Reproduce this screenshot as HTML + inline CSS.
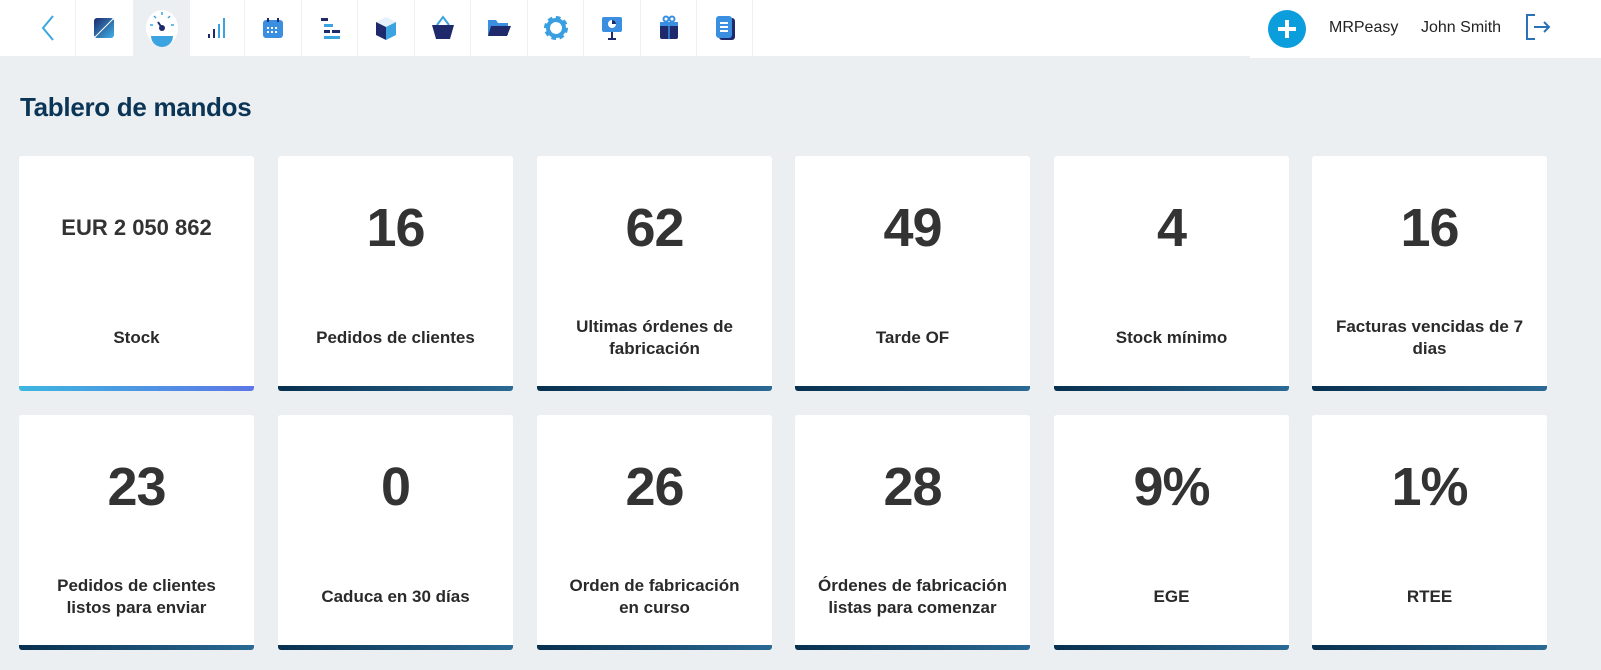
<!DOCTYPE html>
<html><head><meta charset="utf-8"><style>
*{margin:0;padding:0;box-sizing:border-box}
body{width:1601px;height:670px;background:#eceff2;font-family:"Liberation Sans",sans-serif;overflow:hidden;position:relative}
.hdr{position:absolute;left:0;top:0;width:1601px;height:56px;background:#fff}
.tab{position:absolute;top:0;height:56px;width:57px;border-left:1px solid #eef0f3;display:flex;align-items:center;justify-content:center}
.tab.act{background:#eceff2}
h1{position:absolute;left:20px;top:92px;font-size:26px;font-weight:bold;color:#0b3556;letter-spacing:-0.3px}
.card{position:absolute;width:235px;height:235px;background:#fff;border-radius:3px;overflow:hidden}
.card:after{content:"";position:absolute;left:0;right:0;bottom:0;height:5px;background:linear-gradient(90deg,#08304f,#2a6a94)}
.card.first:after{background:linear-gradient(90deg,#3db6e0,#5d77e6)}
.num{position:absolute;left:0;right:0;top:72px;transform:translateY(-50%);text-align:center;font-size:54px;font-weight:bold;color:#333;letter-spacing:-1px}
.num.s{font-size:22px;letter-spacing:0}
.lbl{position:absolute;left:4px;right:4px;top:182px;transform:translateY(-50%);text-align:center;font-size:17px;font-weight:bold;color:#2a2a2a;line-height:22px;white-space:nowrap}
.top{position:absolute;top:0;height:56px;display:flex;align-items:center;font-size:16px;color:#222}
</style></head><body>
<div class="hdr"></div>
<svg style="position:absolute;left:38px;top:14px" width="20" height="28"><path d="M15 2 L5 14 L15 26" fill="none" stroke="#3aa9e0" stroke-width="2"/></svg>
<div class="tab" style="left:75px"><svg width="24" height="24"><defs><linearGradient id="g1" x1="0" y1="0" x2="1" y2="1"><stop offset="0" stop-color="#1e2a6b"/><stop offset="1" stop-color="#3fb2e8"/></linearGradient></defs><rect x="2" y="2" width="20" height="20" rx="3" fill="url(#g1)"/><path d="M22 2 L2 22" stroke="#fff" stroke-width="1"/></svg></div>
<div class="tab act" style="left:133px"><svg width="34" height="40"><ellipse cx="17" cy="20" rx="16" ry="18" fill="#fff"/><path d="M6 28 a11 11 0 0 0 22 0z" fill="#3aa3e0"/><circle cx="17" cy="20" r="3" fill="#1e2a6b"/><path d="M17 20 L13 14" stroke="#1e2a6b" stroke-width="2"/><g stroke="#3aa3e0" stroke-width="1.5"><path d="M17 4v3M9 8l2 2M25 8l-2 2M5 17h3M29 17h-3"/></g></svg></div>
<div class="tab" style="left:188px"><svg width="24" height="24"><g fill="#1e2a6b"><rect x="3" y="18" width="2" height="4"/><rect x="8" y="13" width="2" height="9"/></g><g fill="#3aa3e0"><rect x="13" y="8" width="2" height="14"/><rect x="18" y="2" width="2" height="20"/></g></svg></div>
<div class="tab" style="left:244px"><svg width="24" height="24"><rect x="2" y="4" width="20" height="18" rx="3" fill="#3a8fe0"/><rect x="6" y="2" width="2" height="4" fill="#1e2a6b"/><rect x="16" y="2" width="2" height="4" fill="#1e2a6b"/><g fill="#fff"><rect x="6" y="11" width="2" height="2"/><rect x="10" y="11" width="2" height="2"/><rect x="14" y="11" width="2" height="2"/><rect x="6" y="15" width="2" height="2"/><rect x="10" y="15" width="2" height="2"/><rect x="14" y="15" width="2" height="2"/></g></svg></div>
<div class="tab" style="left:301px"><svg width="24" height="24"><rect x="3" y="2" width="7" height="3" fill="#1e2a6b"/><rect x="6" y="8" width="9" height="3" fill="#3aa3e0"/><rect x="6" y="14" width="6" height="3" fill="#1e2a6b"/><rect x="14" y="14" width="8" height="3" fill="#1e2a6b"/><rect x="6" y="20" width="16" height="3" fill="#3aa3e0"/></svg></div>
<div class="tab" style="left:357px"><svg width="24" height="26"><path d="M12 2 L22 7 L12 12 L2 7z" fill="#e6f0fb"/><path d="M2 7 L12 12 L12 25 L2 20z" fill="#1e2a6b"/><path d="M22 7 L12 12 L12 25 L22 20z" fill="#3aa3e0"/></svg></div>
<div class="tab" style="left:414px"><svg width="26" height="26"><path d="M7 10 L13 2 L19 10" fill="none" stroke="#3aa3e0" stroke-width="2"/><path d="M2 10 H24 L20 24 H6z" fill="#1e2a6b"/></svg></div>
<div class="tab" style="left:470px"><svg width="26" height="22"><path d="M2 3 H10 L12 6 H22 V18 H2z" fill="#3a8fe0"/><path d="M5 9 H25 L21 19 H2z" fill="#1e2a6b"/></svg></div>
<div class="tab" style="left:527px"><svg width="26" height="26"><circle cx="13" cy="13" r="9" fill="none" stroke="#3a9fe0" stroke-width="6" stroke-dasharray="4 3"/><circle cx="13" cy="13" r="8" fill="none" stroke="#3a9fe0" stroke-width="4"/></svg></div>
<div class="tab" style="left:583px"><svg width="24" height="26"><rect x="2" y="2" width="20" height="15" rx="2" fill="#3a8fe0"/><circle cx="12" cy="9" r="4" fill="#fff"/><path d="M12 5 A4 4 0 0 1 16 9 H12z" fill="#1e2a6b"/><path d="M12 17v7M8 24h8" stroke="#1e2a6b" stroke-width="2"/></svg></div>
<div class="tab" style="left:640px"><svg width="24" height="26"><rect x="3" y="7" width="18" height="17" rx="2" fill="#1e2a6b"/><rect x="3" y="7" width="18" height="4" fill="#3a8fe0"/><path d="M12 7V24" stroke="#3a8fe0" stroke-width="1.5"/><circle cx="9" cy="4" r="2.5" fill="none" stroke="#3a8fe0" stroke-width="2"/><circle cx="15" cy="4" r="2.5" fill="none" stroke="#3a8fe0" stroke-width="2"/></svg></div>
<div class="tab" style="left:696px"><svg width="24" height="28"><rect x="6" y="4" width="16" height="22" rx="3" fill="#1e2a6b"/><rect x="3" y="2" width="16" height="22" rx="3" fill="#3a8fe0"/><g stroke="#fff" stroke-width="2"><path d="M7 9h8M7 13h8M7 17h8"/></g></svg></div>
<div class="tab" style="left:752px;width:1px"></div>
<div style="position:absolute;left:1250px;top:56px;width:351px;height:2px;background:#fff"></div>
<svg style="position:absolute;left:1268px;top:10px" width="38" height="38"><circle cx="19" cy="19" r="19" fill="#0c9ddc"/><path d="M19 10v18M10 19h18" stroke="#fff" stroke-width="4"/></svg>
<div class="top" style="left:1329px">MRPeasy</div>
<div class="top" style="left:1421px">John Smith</div>
<svg style="position:absolute;left:1525px;top:13px" width="30" height="28"><path d="M10 2 H2 V26 H10" fill="none" stroke="#2a72b5" stroke-width="2"/><path d="M9 14 H24 M19 9 L24 14 L19 19" fill="none" stroke="#2a72b5" stroke-width="2"/></svg>
<h1>Tablero de mandos</h1>

<div class="card first" style="left:19px;top:156px"><div class="num s">EUR 2 050 862</div><div class="lbl">Stock</div></div>
<div class="card" style="left:278px;top:156px"><div class="num">16</div><div class="lbl">Pedidos de clientes</div></div>
<div class="card" style="left:537px;top:156px"><div class="num">62</div><div class="lbl">Ultimas órdenes de<br>fabricación</div></div>
<div class="card" style="left:795px;top:156px"><div class="num">49</div><div class="lbl">Tarde OF</div></div>
<div class="card" style="left:1054px;top:156px"><div class="num">4</div><div class="lbl">Stock mínimo</div></div>
<div class="card" style="left:1312px;top:156px"><div class="num">16</div><div class="lbl">Facturas vencidas de 7<br>dias</div></div>

<div class="card" style="left:19px;top:415px"><div class="num">23</div><div class="lbl">Pedidos de clientes<br>listos para enviar</div></div>
<div class="card" style="left:278px;top:415px"><div class="num">0</div><div class="lbl">Caduca en 30 días</div></div>
<div class="card" style="left:537px;top:415px"><div class="num">26</div><div class="lbl">Orden de fabricación<br>en curso</div></div>
<div class="card" style="left:795px;top:415px"><div class="num">28</div><div class="lbl">Órdenes de fabricación<br>listas para comenzar</div></div>
<div class="card" style="left:1054px;top:415px"><div class="num">9%</div><div class="lbl">EGE</div></div>
<div class="card" style="left:1312px;top:415px"><div class="num">1%</div><div class="lbl">RTEE</div></div>
</body></html>
